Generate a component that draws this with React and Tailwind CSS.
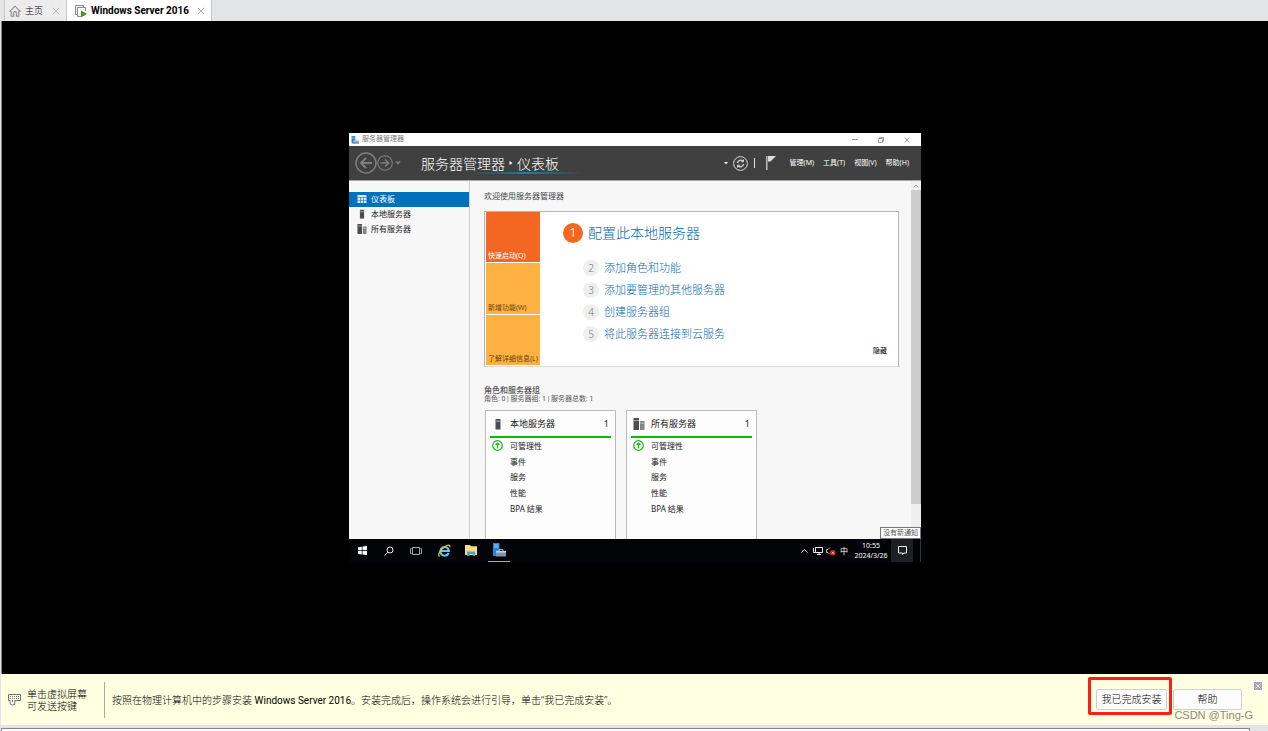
import { useState } from "react";

const menus = ["管理(M)", "工具(T)", "视图(V)", "帮助(H)"];
const steps = ["添加角色和功能", "添加要管理的其他服务器", "创建服务器组", "将此服务器连接到云服务"];
const groups = [
  { name: "本地服务器", count: 1, multi: false },
  { name: "所有服务器", count: 1, multi: true },
];
const groupRows = ["可管理性", "事件", "服务", "性能", "BPA 结果"];

function HomeIcon() {
  return (
    <svg className="h-3 w-3" viewBox="0 0 12 12" fill="none" stroke="#8a8a8a" strokeWidth="1.1">
      <path d="M.6 6.6 6 1.2l5.4 5.4M2.2 6v5.2h2.4V8a1.4 1.4 0 0 1 2.8 0v3.2h2.4V6" />
    </svg>
  );
}

function VmIcon() {
  return (
    <svg className="h-3 w-3" viewBox="0 0 12 12" fill="none">
      <path d="M2.5 9.5h-2v-9h8v2" stroke="#8a8a8a" />
      <path d="M6 11.500H2.500v-9h8V6" stroke="#8a8a8a" />
      <path d="M6 5.600 12 9l-6 3.400z" fill="#3f9c12" />
    </svg>
  );
}

function CloseIcon({ className = "h-2 w-2", color = "#b4b4b4" }) {
  return (
    <svg className={className} viewBox="0 0 8 8" fill="none" stroke={color} strokeWidth="1">
      <path d="m.8.8 6.400 6.400m0-6.400L.8 7.200" />
    </svg>
  );
}

function ManagerIcon({ className }) {
  return (
    <svg className={className} viewBox="0 0 14 14">
      <path d="M1 0h6.500v13H1z" fill="#1e88dc" />
      <path d="M2 2h4.500M2 4h4.500" stroke="#bfe2fa" strokeWidth=".8" />
      <path d="M4 8h10v5.500H4z" fill="#7c96a9" />
      <path d="M4 8h10v1.600H4z" fill="#c3d2dc" />
      <path d="M7 8V6.700h4V8" fill="none" stroke="#c3d2dc" />
    </svg>
  );
}

function ServerIcon({ multi = false, className = "h-3 w-3" }) {
  if (multi) {
    return (
      <svg className={className} viewBox="0 0 12 12">
        <path d="M.5 0h5.500v12H.5z" fill="#4d4d4d" />
        <path d="M.5 2.500H6" stroke="#a8a8a8" />
        <path d="M7 3h4.500v9H7z" fill="#858585" />
        <path d="M7 5h4.500" stroke="#d2d2d2" strokeWidth=".8" />
      </svg>
    );
  }
  return (
    <svg className={className} viewBox="0 0 12 12">
      <path d="M3.500 1h5v10.500h-5z" fill="#4d4d4d" />
      <path d="M3.500 3.200h5" stroke="#b0b0b0" />
    </svg>
  );
}

function GridIcon() {
  return (
    <svg className="h-2 w-2.5" viewBox="0 0 10 8">
      <path d="M.5 0h9v2h-9zM.5 2.600H3V5H.5zM3.600 2.600h2.600V5H3.600zM6.800 2.600h2.700V5H6.800zM.5 5.600H3V8H.5zM3.600 5.600h2.600V8H3.600zM6.800 5.600h2.700V8H6.800z" fill="#d7e9f6" />
    </svg>
  );
}

function UpIcon() {
  return (
    <svg className="h-[11px] w-[11px]" viewBox="0 0 11 11" fill="none" stroke="#12b812">
      <circle cx="5.500" cy="5.500" r="4.800" strokeWidth="1.200" />
      <path d="M5.500 8.300V3.500M3.500 5.200l2-2 2 2" strokeWidth="1.200" />
    </svg>
  );
}

function NavArrow({ back = false, className }) {
  return (
    <svg className={className} viewBox="0 0 22 22" fill="none" stroke="#7e7e7e" strokeWidth="1.500">
      <circle cx="11" cy="11" r="10" />
      <path d={back ? "M17 11H6m5-5-5 5 5 5" : "M5 11h11m-5-5 5 5-5 5"} strokeWidth="2" />
    </svg>
  );
}

function TabBar() {
  return (
    <nav className="flex h-[21px] items-stretch bg-[#e3e4e6] pl-1 text-[10px] text-black">
      <div className="flex items-center border-x border-[#c6c7c9] bg-[#ececed] pr-1.5 pl-1">
        <button className="flex items-center gap-1">
          <HomeIcon />
          <span className="text-[9px] font-light">主页</span>
        </button>
        <button aria-label="关闭主页" className="ml-[9px]">
          <CloseIcon />
        </button>
      </div>
      <div className="flex items-center border-r border-[#c6c7c9] bg-white pr-1.5 pl-2">
        <button className="flex items-center gap-1">
          <VmIcon />
          <span className="font-['Roboto','Noto_Sans_CJK_SC',sans-serif] text-[10px] font-bold">Windows Server 2016</span>
        </button>
        <button aria-label="关闭虚拟机" className="ml-2">
          <CloseIcon />
        </button>
      </div>
    </nav>
  );
}

function TitleBar() {
  return (
    <div className="flex h-[13px] items-center bg-white pr-[11px] pl-0.5 text-[7px] text-[#777]">
      <ManagerIcon className="h-2 w-2" />
      <span className="ml-[3px]">服务器管理器</span>
      <div className="ml-auto flex items-center gap-5">
        <button aria-label="最小化" className="h-px w-1.5 bg-[#999]" />
        <button aria-label="还原">
          <svg className="h-1.5 w-1.5" viewBox="0 0 6 6" fill="none" stroke="#777" strokeWidth=".7">
            <path d="M.5 1.500h4v4h-4zM1.500 1.500v-1h4v4h-1" />
          </svg>
        </button>
        <button aria-label="关闭">
          <CloseIcon className="h-1.5 w-1.5" color="#777" />
        </button>
      </div>
    </div>
  );
}

function Header() {
  return (
    <header className="flex h-[34px] items-center bg-[#404040] pr-3 pl-1.5 text-white">
      <button aria-label="后退">
        <NavArrow back className="h-[22px] w-[22px]" />
      </button>
      <button aria-label="前进">
        <NavArrow className="h-4 w-4" />
      </button>
      <svg className="ml-0.5 h-1 w-1.5" viewBox="0 0 6 4">
        <path d="M0 .5h6l-3 3z" fill="#7e7e7e" />
      </svg>
      <div className="relative ml-5 flex items-center text-[14px] font-light">
        <span className="absolute -right-6 bottom-0 h-0.5 w-28 bg-linear-to-r from-transparent via-[#0d86a8] to-transparent" />
        <span className="relative">服务器管理器</span>
        <svg className="mx-1 h-1.5 w-1" viewBox="0 0 4 6">
          <path d="M.5 1v4l3-2z" fill="#fff" />
        </svg>
        <h1 className="relative">仪表板</h1>
      </div>
      <div className="ml-auto flex items-center">
        <svg className="h-1 w-1" viewBox="0 0 4 4">
          <path d="M0 1h4L2 3.200z" fill="#fff" />
        </svg>
        <button aria-label="刷新" className="ml-[5px]">
          <svg className="h-[15px] w-[15px]" viewBox="0 0 15 15" fill="none" stroke="#d8d8d8">
            <circle cx="7.500" cy="7.500" r="6.900" />
            <path d="M4.500 7a3.200 3.200 0 0 1 5.500-1.800M10.500 8A3.200 3.200 0 0 1 5 9.800" strokeWidth="1.300" />
            <path d="M10.500 3.500v2.300H8.200M4.500 11.500V9.200h2.300" />
          </svg>
        </button>
        <span className="ml-1.5 h-2.5 w-px bg-[#ddd]" />
        <button aria-label="通知" className="ml-[11px]">
          <svg className="h-3.5 w-2.5" viewBox="0 0 10 14">
            <path d="M0 0h1.500v14H0z" fill="#bbb" />
            <path d="M2 0h8L4.500 5.500H2z" fill="#ddd" />
          </svg>
        </button>
        <div className="ml-3.5 flex gap-[9px] text-[7px]">
          {menus.map((menu) => (
            <button key={menu}>{menu}</button>
          ))}
        </div>
      </div>
    </header>
  );
}

function Sidebar() {
  return (
    <aside className="w-[121px] shrink-0 border-r border-[#cfcfcf] pt-[11px] text-[8px] text-[#222]">
      <button className="flex h-[15px] w-full items-center gap-1 bg-[#0072bc] pb-px pl-2 text-white">
        <GridIcon />
        仪表板
      </button>
      <button className="flex h-3.5 w-full items-center gap-1 pl-2">
        <ServerIcon className="h-2.5 w-2.5" />
        本地服务器
      </button>
      <button className="flex h-[15px] w-full items-center gap-1 pl-2">
        <ServerIcon multi className="h-2.5 w-2.5" />
        所有服务器
      </button>
    </aside>
  );
}

function WelcomePanel() {
  return (
    <section className="mt-[9px] flex h-[156px] border border-[#b5b5b5] border-b-[#dcdcdc] bg-white pl-px">
      <div className="grid w-[54px] shrink-0 grid-rows-3 gap-px pb-px text-[7px]/[9px] whitespace-nowrap text-[#6b4310]">
        <button className="flex items-end bg-[#f36722] px-0.5 pb-0.5 text-white">快速启动(Q)</button>
        <button className="flex items-end bg-[#ffb142] px-0.5 pb-0.5">新增功能(W)</button>
        <button className="flex items-end bg-[#ffb142] px-0.5 pb-0.5">了解详细信息(L)</button>
      </div>
      <div className="relative flex-1 pt-2.5 pl-[23px] text-[#0a6ab0]">
        <a href="#configure" className="flex items-center gap-[5px] text-[14px] font-light">
          <span className="flex h-5 w-5 items-center justify-center rounded-full bg-[#f36722] text-[13px] text-white">1</span>
          配置此本地服务器
        </a>
        <ol className="mt-[17px] pl-5">
          {steps.map((step, index) => (
            <li key={step} className="mb-1.5">
              <a href="#step" className="flex h-4 items-center gap-[5px] text-[11px] font-light">
                <span className="flex h-4 w-4 items-center justify-center rounded-full bg-[#efefef] text-[10px] text-[#777]">
                  {index + 2}
                </span>
                {step}
              </a>
            </li>
          ))}
        </ol>
        <button className="absolute right-[11px] bottom-2.5 text-[7px]/[10px] text-black">隐藏</button>
      </div>
    </section>
  );
}

function GroupCard({ group }) {
  return (
    <article className="h-40 w-[131px] border border-[#bcbcbc] bg-[#fdfdfd] px-1 text-[#222]">
      <div className="flex h-[25px] items-center pt-px pr-0.5 pl-0.5 text-[9px]">
        <ServerIcon multi={group.multi} />
        <h3 className="ml-1.5">{group.name}</h3>
        <span className="ml-auto">{group.count}</span>
      </div>
      <div className="h-0.5 bg-[#00c000]" />
      <ul className="grid h-[78px] grid-rows-5 text-[8px]/[15px]">
        {groupRows.map((row, index) => (
          <li key={row} className="flex items-center pl-0.5">
            <span className="w-[18px]">{index === 0 && <UpIcon />}</span>
            <button>{row}</button>
          </li>
        ))}
      </ul>
    </article>
  );
}

function Dashboard() {
  return (
    <div className="flex min-h-0 flex-1 overflow-hidden border-t border-[#a9a9a9] bg-[#f7f7f7]">
      <Sidebar />
      <main className="min-w-0 flex-1 pt-[9px] pr-3 pl-3.5">
        <h2 className="text-[8px]/[12px] text-[#444]">欢迎使用服务器管理器</h2>
        <WelcomePanel />
        <h2 className="mt-[18px] text-[8px]/[10px] font-medium text-[#555]">角色和服务器组</h2>
        <p className="font-['Roboto','Noto_Sans_CJK_SC',sans-serif] text-[7px]/[9px] text-[#555]">
          角色: 0 | 服务器组: 1 | 服务器总数: 1
        </p>
        <div className="mt-1.5 flex gap-2.5 pl-px">
          {groups.map((group) => (
            <GroupCard key={group.name} group={group} />
          ))}
        </div>
      </main>
      <div className="flex w-2.5 flex-col bg-[#efefef]">
        <button aria-label="向上滚动" className="flex h-[9px] items-center justify-center">
          <svg className="h-1 w-1.5" viewBox="0 0 6 4" fill="none" stroke="#999">
            <path d="m.5 3.500 2.500-2.500 2.500 2.500" />
          </svg>
        </button>
        <div className="h-[314px] border-r border-[#b9b9b9] bg-[#cdcdcd]" />
      </div>
    </div>
  );
}

function Taskbar() {
  return (
    <footer className="relative flex h-[23px] items-center bg-[#020408] pl-2 text-white">
      <button aria-label="开始">
        <svg className="h-[9px] w-[11px]" viewBox="0 0 11 9" fill="#fff">
          <path d="M1 1.200 4.800.7v3.500H1zM5.500.6 10 0v4.200H5.500zM1 4.900h3.800v3.500L1 7.900zM5.500 4.900H10V9l-4.500-.5z" />
        </svg>
      </button>
      <button aria-label="搜索" className="ml-4">
        <svg className="h-2.5 w-2.5" viewBox="0 0 10 10" fill="none" stroke="#eee">
          <circle cx="6" cy="4" r="3" />
          <path d="M3.800 6.200.5 9.500" />
        </svg>
      </button>
      <button aria-label="任务视图" className="ml-4">
        <svg className="h-2.5 w-3" viewBox="0 0 12 10" fill="none" stroke="#aaa">
          <path d="M2.500 1.500h7v7h-7zM1.500 2.500h-1v5h1M10.500 2.500h1v5h-1" />
        </svg>
      </button>
      <button aria-label="Internet Explorer" className="ml-4">
        <svg className="h-[13px] w-[13px]" viewBox="0 0 13 13" fill="none">
          <path d="M10.700 9A4.300 4.300 0 1 1 11 7H3.500" stroke="#5cc8f5" strokeWidth="2.100" />
          <path d="M1.800 12C-.8 12.600 1 7.500 5 4s8-4.200 6.600-.6" stroke="#f3c627" strokeWidth="1.200" />
        </svg>
      </button>
      <button aria-label="文件资源管理器" className="ml-3.5">
        <svg className="h-[11px] w-3" viewBox="0 0 12 11">
          <path d="M0 0h5l1 1.200h6V10H0z" fill="#f7dc85" />
          <path d="M2 11V6.500h8V11H7.500V9h-3v2z" fill="#35a7e0" />
        </svg>
      </button>
      <button aria-label="服务器管理器" className="ml-[11px] flex h-full w-[22px] items-center justify-center border-b border-[#76b9ed]">
        <ManagerIcon className="h-3.5 w-3.5" />
      </button>

      <div className="ml-auto flex h-full items-center">
        <svg className="h-1 w-[7px]" viewBox="0 0 7 4" fill="none" stroke="#eee">
          <path d="m.5 3.500 3-3 3 3" />
        </svg>
        <svg className="ml-[5px] h-2 w-2.5" viewBox="0 0 10 8" fill="none" stroke="#eee">
          <path d="M2.500.5h7v5h-7zM4 7.500h4M6 5.500v2M.5 1v4.500h2" />
        </svg>
        <svg className="ml-[3px] h-2.5 w-2.5" viewBox="0 0 10 10">
          <path d="M.5 3.500H2l2-2M.5 3.500v3H2l1.500 1.500" fill="none" stroke="#bbb" />
          <circle cx="6.800" cy="6.800" r="2.800" fill="#e01b24" />
          <path d="m5.800 5.800 2 2m0-2-2 2" stroke="#fff" strokeWidth=".7" />
        </svg>
        <span className="ml-1 text-[8px]">中</span>
        <div className="ml-1.5 w-[34px] text-center text-[7px]/[10px] whitespace-nowrap">
          <div>10:55</div>
          <div>2024/3/26</div>
        </div>
        <button aria-label="操作中心" className="ml-[3px] flex h-full w-[22px] items-center justify-center bg-[#1d1f23]">
          <svg className="h-[9px] w-[9px]" viewBox="0 0 9 9" fill="none" stroke="#eee">
            <path d="M.5.5h8V7H6L4.500 8.500V7h-4z" />
          </svg>
        </button>
        <span className="ml-[5px] h-full border-r border-[#333] pr-0.5" />
      </div>
      <div role="tooltip" className="absolute right-0 bottom-full flex h-3 items-center border border-[#767676] bg-white px-0.5 text-[7px] text-[#555]">
        没有新通知
      </div>
    </footer>
  );
}

function InstallBanner({ onClose }) {
  return (
    <div className="relative ml-px flex h-[51px] items-center bg-[#ffffe1] pr-[26px] pl-[7px] text-[10px] font-light text-black">
      <svg className="h-[13px] w-[13px] shrink-0" viewBox="0 0 13 13" fill="none" stroke="#6c7472">
        <path d="M.5 1.500h12v6h-12z" />
        <path d="M2 3.500h9M2 5.500h9" strokeDasharray="1 1" />
        <path d="M2 7v2.500a2.500 2.500 0 0 0 5 0V7M4.500 7v2" fill="#ffffe1" />
      </svg>
      <p className="ml-1.5 text-[10px]/[12px]">
        单击虚拟屏幕
        <br />
        可发送按键
      </p>
      <span className="ml-[17px] h-9 w-px bg-[#a9a99c]" />
      <p className="ml-[7px] pt-px">
        按照在物理计算机中的步骤安装{" "}
        <span className="font-['Roboto','Noto_Sans_CJK_SC',sans-serif] font-normal">Windows Server 2016</span>
        。安装完成后，操作系统会进行引导，单击“我已完成安装”。
      </p>
      <div className="ml-auto flex gap-1.5">
        <div className="relative">
          <button className="h-[21px] w-[71px] rounded-xs border border-[#cfd0d4] bg-[#fdfdfd]">我已完成安装</button>
          <span className="pointer-events-none absolute -top-3 -right-[5px] -bottom-[5px] -left-2 rounded-xs border-3 border-[#ff1e14]" />
        </div>
        <button className="h-[21px] w-[69px] rounded-xs border border-[#cfd0d4] bg-[#fdfdfd]">帮助</button>
      </div>
      <button aria-label="关闭" onClick={onClose} className="absolute top-[6px] right-1 border-2 border-white bg-[#a9a9a9] p-px">
        <CloseIcon className="h-1.5 w-1.5" color="#fff" />
      </button>
      <span className="absolute right-[15px] bottom-1 font-['Liberation_Sans'] text-[11px]/[12px] font-normal text-[#8a8a80]">
        CSDN @Ting-G
      </span>
    </div>
  );
}

export default function App() {
  const [showBanner, setShowBanner] = useState(true);

  return (
    <div className="flex min-h-screen flex-col bg-[#e3e4e6] font-['Noto_Sans','Noto_Sans_CJK_SC',sans-serif]">
      <TabBar />
      <div className="ml-px flex flex-1 items-center justify-center border-l border-[#85868c] bg-black">
        <div className="flex h-[429px] w-[572px] max-w-full flex-col overflow-hidden">
          <TitleBar />
          <Header />
          <Dashboard />
          <Taskbar />
        </div>
      </div>
      {showBanner && <InstallBanner onClose={() => setShowBanner(false)} />}
      <div className="mt-[3px] mr-[18px] ml-px h-[3px] border-t border-r border-l border-[#85868c] bg-white" />
    </div>
  );
}
